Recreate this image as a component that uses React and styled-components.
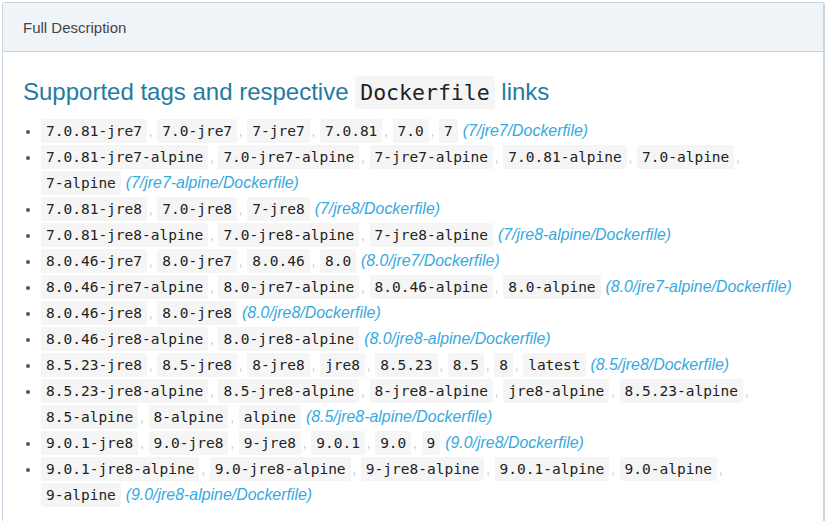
import styled, { createGlobalStyle } from "styled-components";

const GlobalStyle = createGlobalStyle`
  body {
    margin: 0;
    background: #ffffff;
    font-family: "Liberation Sans", Arial, sans-serif;
  }
`;

const Page = styled.div`
  padding: 2px 2px 0 2px;
`;

const Panel = styled.section`
  border: 1px solid #c9d4e0;
  border-right-width: 2px;
  border-bottom: none;
  border-radius: 3px 3px 0 0;
  background: #fff;
  min-height: 519px;
`;

const PanelHeader = styled.header`
  height: 48px;
  display: flex;
  align-items: center;
  padding: 0 20px;
  background: #eff4f9;
  border-bottom: 1px solid #c9d4e0;
  color: #444;
  font-size: 15px;
`;

const PanelBody = styled.div`
  padding: 24px 20px 0 20px;
  color: #333;
`;

const Heading = styled.h2`
  margin: 0 0 10px 0;
  font-size: 24px;
  font-weight: normal;
  color: #1f7ba3;
  line-height: 32px;
`;

const Code = styled.code`
  font-family: "DejaVu Sans Mono", Consolas, monospace;
  font-size: ${(p) => (p.$big ? "21.5px" : "14.5px")};
  line-height: 1;
  white-space: nowrap;
  color: #222;
  background: #f5f5f5;
  padding: 4px 5px;
  border-radius: 2px;
`;

const TagList = styled.ul`
  margin: 0;
  padding-left: 18px;
  list-style: disc;
  color: #555;
`;

const Item = styled.li`
  line-height: 26px;
  font-size: 14px;
`;

const Sep = styled.span`
  color: #9fc4de;
  line-height: 1;
  margin: 0 1px 0 2px;
  font-size: 12px;
`;

const FileLink = styled.a`
  color: #36a9e0;
  font-style: italic;
  font-size: 15.9px;
  line-height: 1;
  text-decoration: none;
  margin-left: 1px;
`;

const rows = [
  [["7.0.81-jre7", "7.0-jre7", "7-jre7", "7.0.81", "7.0", "7"], "7/jre7/Dockerfile"],
  [["7.0.81-jre7-alpine", "7.0-jre7-alpine", "7-jre7-alpine", "7.0.81-alpine", "7.0-alpine", "7-alpine"], "7/jre7-alpine/Dockerfile"],
  [["7.0.81-jre8", "7.0-jre8", "7-jre8"], "7/jre8/Dockerfile"],
  [["7.0.81-jre8-alpine", "7.0-jre8-alpine", "7-jre8-alpine"], "7/jre8-alpine/Dockerfile"],
  [["8.0.46-jre7", "8.0-jre7", "8.0.46", "8.0"], "8.0/jre7/Dockerfile"],
  [["8.0.46-jre7-alpine", "8.0-jre7-alpine", "8.0.46-alpine", "8.0-alpine"], "8.0/jre7-alpine/Dockerfile"],
  [["8.0.46-jre8", "8.0-jre8"], "8.0/jre8/Dockerfile"],
  [["8.0.46-jre8-alpine", "8.0-jre8-alpine"], "8.0/jre8-alpine/Dockerfile"],
  [["8.5.23-jre8", "8.5-jre8", "8-jre8", "jre8", "8.5.23", "8.5", "8", "latest"], "8.5/jre8/Dockerfile"],
  [["8.5.23-jre8-alpine", "8.5-jre8-alpine", "8-jre8-alpine", "jre8-alpine", "8.5.23-alpine", "8.5-alpine", "8-alpine", "alpine"], "8.5/jre8-alpine/Dockerfile"],
  [["9.0.1-jre8", "9.0-jre8", "9-jre8", "9.0.1", "9.0", "9"], "9.0/jre8/Dockerfile"],
  [["9.0.1-jre8-alpine", "9.0-jre8-alpine", "9-jre8-alpine", "9.0.1-alpine", "9.0-alpine", "9-alpine"], "9.0/jre8-alpine/Dockerfile"],
];

export default function App() {
  return (
    <>
      <GlobalStyle />
      <Page>
        <Panel>
          <PanelHeader>Full Description</PanelHeader>
          <PanelBody>
            <Heading>
              Supported tags and respective <Code $big>Dockerfile</Code> links
            </Heading>
            <TagList>
              {rows.map(([tags, file]) => (
                <Item key={file}>
                  {tags.map((t, i) => (
                    <span key={t}>
                      <Code>{t}</Code>
                      {i < tags.length - 1 && <Sep>,</Sep>}{" "}
                    </span>
                  ))}
                  <FileLink href="#">({file})</FileLink>
                </Item>
              ))}
            </TagList>
          </PanelBody>
        </Panel>
      </Page>
    </>
  );
}
